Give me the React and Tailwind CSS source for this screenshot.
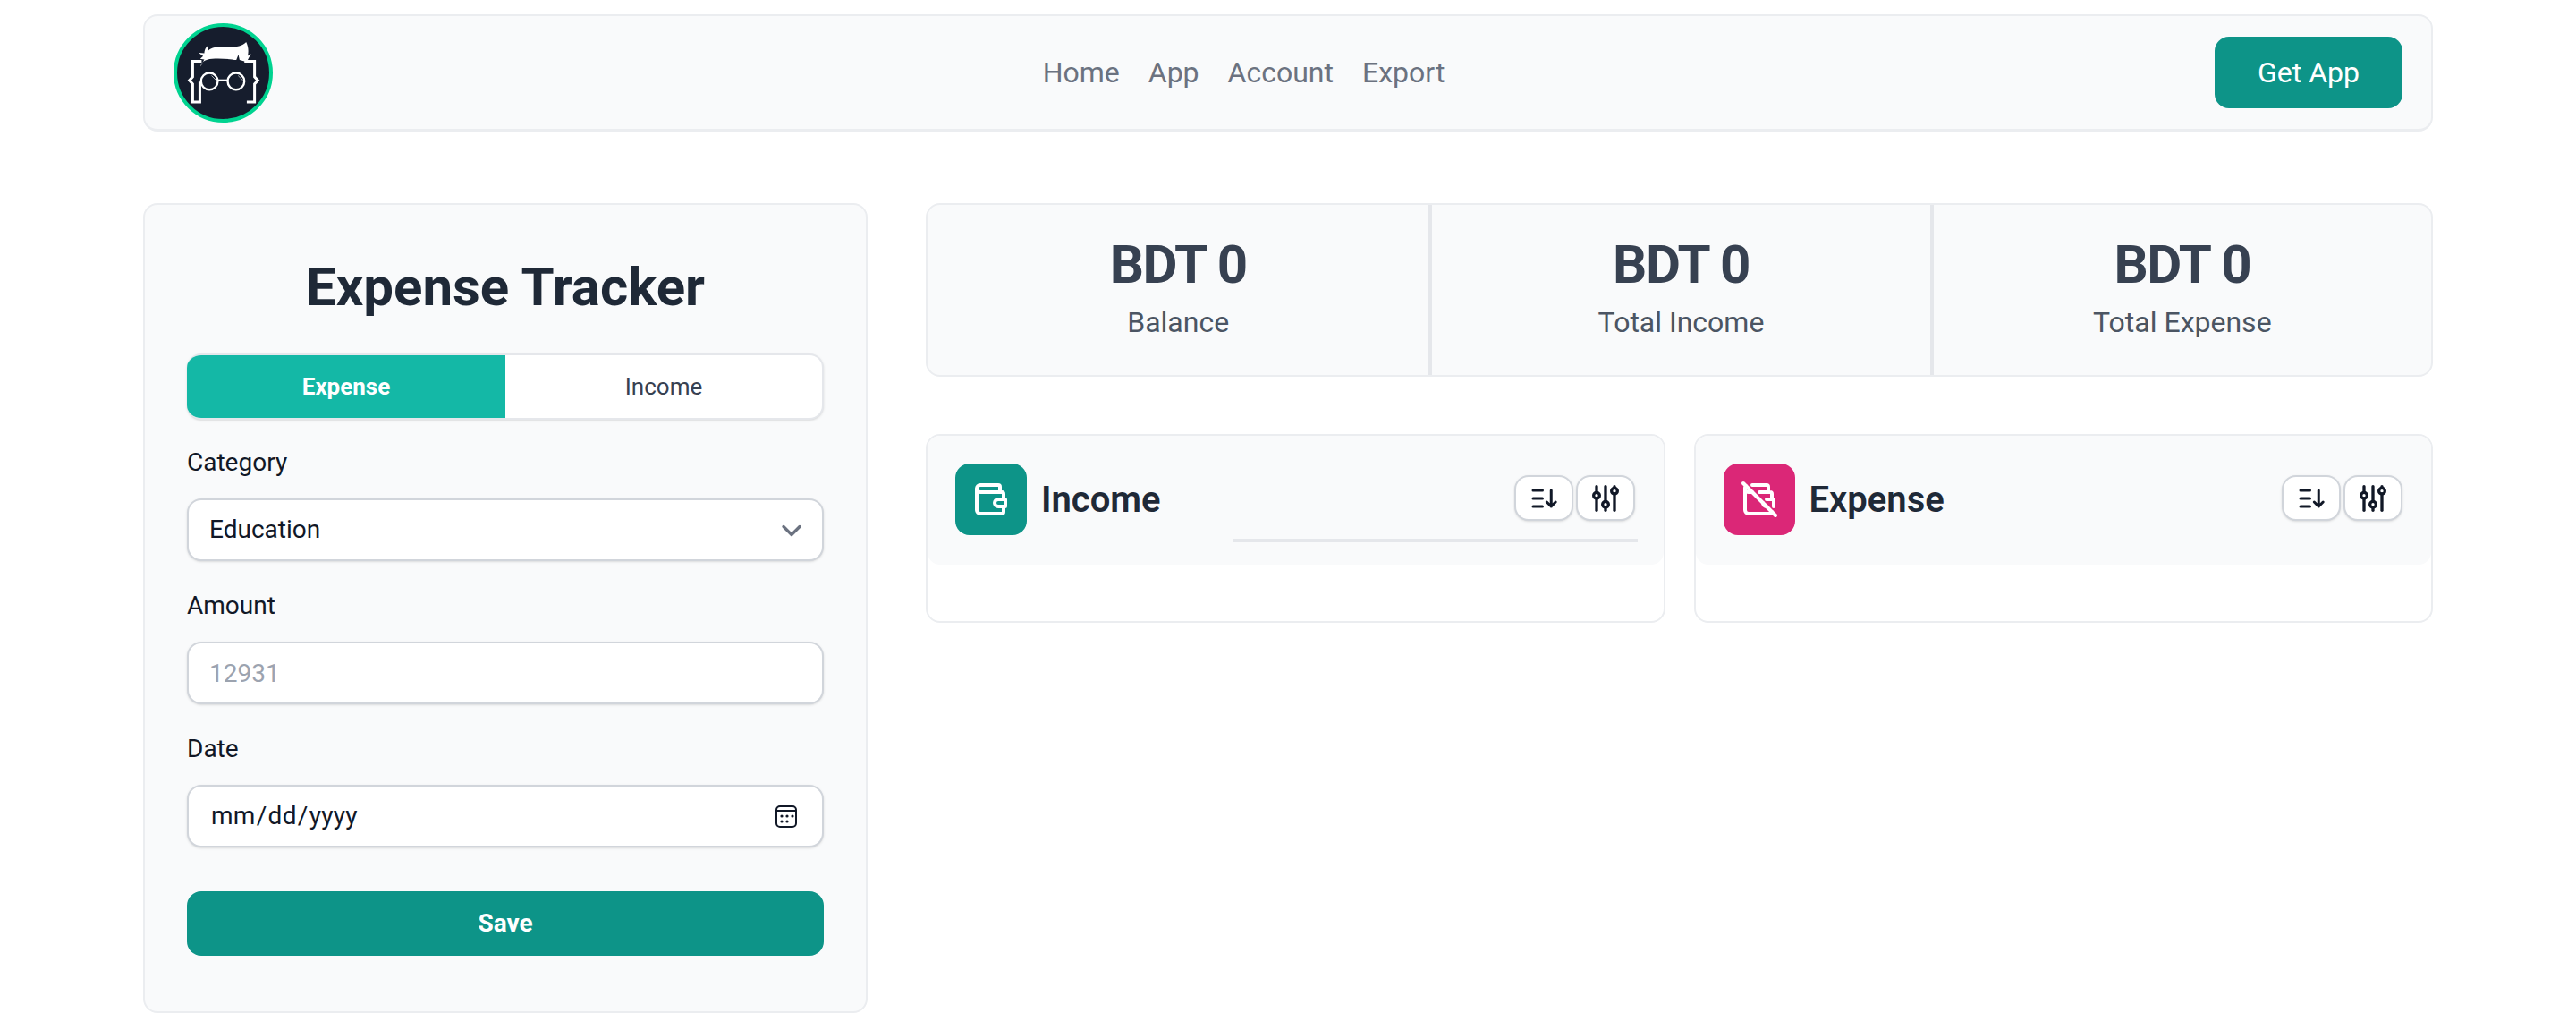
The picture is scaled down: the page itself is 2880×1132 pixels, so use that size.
import React from 'react';
import { ChevronDown } from 'lucide-react';
import { TbWallet, TbWalletOff, TbAdjustments } from 'react-icons/tb';

const Logo = () => (
  <svg viewBox="71 47 332 332" className="w-[111px] h-[111px] shrink-0">
    <circle cx="237" cy="213" r="160" fill="#161d2d" stroke="#00d390" strokeWidth="12" />
    <path d="M165 174H135V226L124 238L135 250V310H159V242" fill="none" stroke="#fff" strokeWidth="9" />
    <path d="M308 174H342V226L353 238L342 250V310H316" fill="none" stroke="#fff" strokeWidth="9" />
    <path d="M162 192C162 178 176 168 200 166C225 163 260 167 281 170L288 152L292 170L308 174L318 172L330 149L319 156C323 140 321 125 314 110C298 126 268 130 240 126C218 123 194 128 186 140L187 122C177 128 175 138 174 147L155 146L170 157L160 166L174 168L168 178Z" fill="#fff" />
    <circle cx="191" cy="241" r="28" fill="#161d2d" stroke="#fff" strokeWidth="7" />
    <circle cx="280" cy="241" r="28" fill="#161d2d" stroke="#fff" strokeWidth="7" />
    <path d="M219 238H252" stroke="#fff" strokeWidth="7" />
    <path d="M198 222L214 238M204 218L218 232M287 222L303 238M293 218L307 232" stroke="#fff" strokeWidth="2" />
  </svg>
);

const SortIcon = () => (
  <svg viewBox="0 0 24 24" fill="none" stroke="currentColor" strokeWidth="2" strokeLinecap="round" strokeLinejoin="round" className="w-9 h-9">
    <path d="M4 6h7M4 12h7M4 18h7M17.5 6v12M14.2 14.7l3.3 3.3l3.3-3.3" />
  </svg>
);

const CalendarIcon = () => (
  <svg viewBox="0 0 24 25" fill="none" className="w-[24px] h-[25px]">
    <rect x="1" y="1" width="22" height="23" rx="4" stroke="#111827" strokeWidth="2" />
    <path d="M1 6h22" stroke="#111827" strokeWidth="2" />
    <g fill="#111827">
      <circle cx="7" cy="12" r="1.6" />
      <circle cx="13" cy="12" r="1.6" />
      <circle cx="19" cy="12" r="1.6" />
      <circle cx="7" cy="18" r="1.6" />
      <circle cx="13" cy="18" r="1.6" />
    </g>
  </svg>
);

const Field = ({ label, first, children }) => (
  <div>
    <label className={`block mb-[20px] text-[28px] leading-[40px] text-[#111827] ${first ? 'mt-[28px]' : 'mt-[30px]'}`}>{label}</label>
    {children}
  </div>
);

const fieldClass = 'w-full h-[70px] rounded-[16px] border-2 border-[#d1d5db] bg-white text-[28px] text-[#111827] shadow-sm outline-none';

const Stat = ({ label, first }) => (
  <div className={`flex flex-col items-center pt-[31px] pb-[35px] ${first ? '' : 'border-l-[4px] border-[#e5e7eb]'}`}>
    <span className="text-[60px] leading-[72px] font-bold tracking-tight text-[#374151]">BDT 0</span>
    <span className="mt-[4px] text-[32px] leading-[48px] text-[#4b5563]">{label}</span>
  </div>
);

const ListCard = ({ title, icon, iconBg, line }) => (
  <div className="rounded-[16px] border-2 border-[#ebedf0] bg-white">
    <div className="flex justify-between h-[144px] rounded-[14px] bg-[#f9fafb] pl-[31px] pr-[29px] pt-[31px]">
      <div className="flex items-center gap-4 h-[80px]">
        <div className={`flex items-center justify-center w-[80px] h-[80px] rounded-[16px] text-white ${iconBg}`}>{icon}</div>
        <h3 className="pt-[2px] text-[40px] leading-[56px] font-semibold text-[#1f2937]">{title}</h3>
      </div>
      <div className="flex flex-col items-end w-[452px] pt-[13px]">
        <div className="flex gap-[3px] mr-[3px]">
          <button className="flex items-center justify-center w-[66px] h-[51px] rounded-[16px] border-2 border-[#d1d5db] bg-white text-[#111827] shadow-sm">
            <SortIcon />
          </button>
          <button className="flex items-center justify-center w-[66px] h-[51px] rounded-[16px] border-2 border-[#d1d5db] bg-white text-[#111827] shadow-sm">
            <TbAdjustments size={40} />
          </button>
        </div>
        {line && <div className="mt-[20px] w-full h-[4px] bg-[#e5e7eb]" />}
      </div>
    </div>
    <div className="h-[63px]" />
  </div>
);

export default function App() {
  return (
    <div className="w-[2560px] mx-auto pt-4 font-['Roboto',sans-serif]">
      <nav className="flex items-center justify-between h-[131px] rounded-[16px] border-2 border-b-[3px] border-[#ebedf0] bg-[#f9fafb] pl-[32px] pr-[32px]">
        <Logo />
        <ul className="flex gap-8 text-[32px] text-[#6b7280]">
          <li>Home</li>
          <li>App</li>
          <li>Account</li>
          <li>Export</li>
        </ul>
        <button className="w-[210px] h-[80px] rounded-[16px] bg-[#0d9488] text-[32px] text-white">Get App</button>
      </nav>

      <main className="flex gap-[65px] mt-[80px]">
        <section className="w-[810px] h-[905px] shrink-0 rounded-[16px] border-2 border-[#ebedf0] bg-[#f9fafb] px-[47px] pt-[56px]">
          <h2 className="text-center text-[60px] leading-[72px] font-bold text-[#1f2937]">Expense Tracker</h2>
          <div className="flex mt-[38px] h-[74px] rounded-[16px] border-y-2 border-r-2 border-[#e5e7eb] bg-white overflow-hidden shadow-sm">
            <button className="w-[356px] bg-[#14b8a6] text-[26px] font-bold text-white">Expense</button>
            <button className="flex-1 text-[26px] text-[#374151]">Income</button>
          </div>
          <Field label="Category" first>
            <div className="relative">
              <select className={`${fieldClass} px-[23px] appearance-none`} defaultValue="Education">
                <option>Education</option>
              </select>
              <ChevronDown size={36} strokeWidth={2.2} className="absolute right-[18px] top-[18px] text-[#6b7280] pointer-events-none" />
            </div>
          </Field>
          <Field label="Amount">
            <input type="number" placeholder="12931" className={`${fieldClass} px-[23px] placeholder:text-[#9ca3af]`} />
          </Field>
          <Field label="Date">
            <div className="relative">
              <input type="date" className={`${fieldClass} px-[24px] tracking-[0.3px] [&::-webkit-calendar-picker-indicator]:opacity-0`} />
              <span className="absolute right-[30px] top-[23px] pointer-events-none">
                <CalendarIcon />
              </span>
            </div>
          </Field>
          <button className="w-full h-[72px] mt-[49px] rounded-[16px] bg-[#0d9488] text-[28px] font-bold text-white">Save</button>
        </section>

        <div className="flex-1 min-w-0">
          <div className="grid grid-cols-3 rounded-[16px] border-2 border-[#ebedf0] bg-[#f9fafb]">
            <Stat label="Balance" first />
            <Stat label="Total Income" />
            <Stat label="Total Expense" />
          </div>
          <div className="grid grid-cols-2 gap-8 mt-[64px]">
            <ListCard title="Income" iconBg="bg-[#0d9488]" icon={<TbWallet size={48} />} line />
            <ListCard title="Expense" iconBg="bg-[#db2777]" icon={<TbWalletOff size={48} />} />
          </div>
        </div>
      </main>
    </div>
  );
}
